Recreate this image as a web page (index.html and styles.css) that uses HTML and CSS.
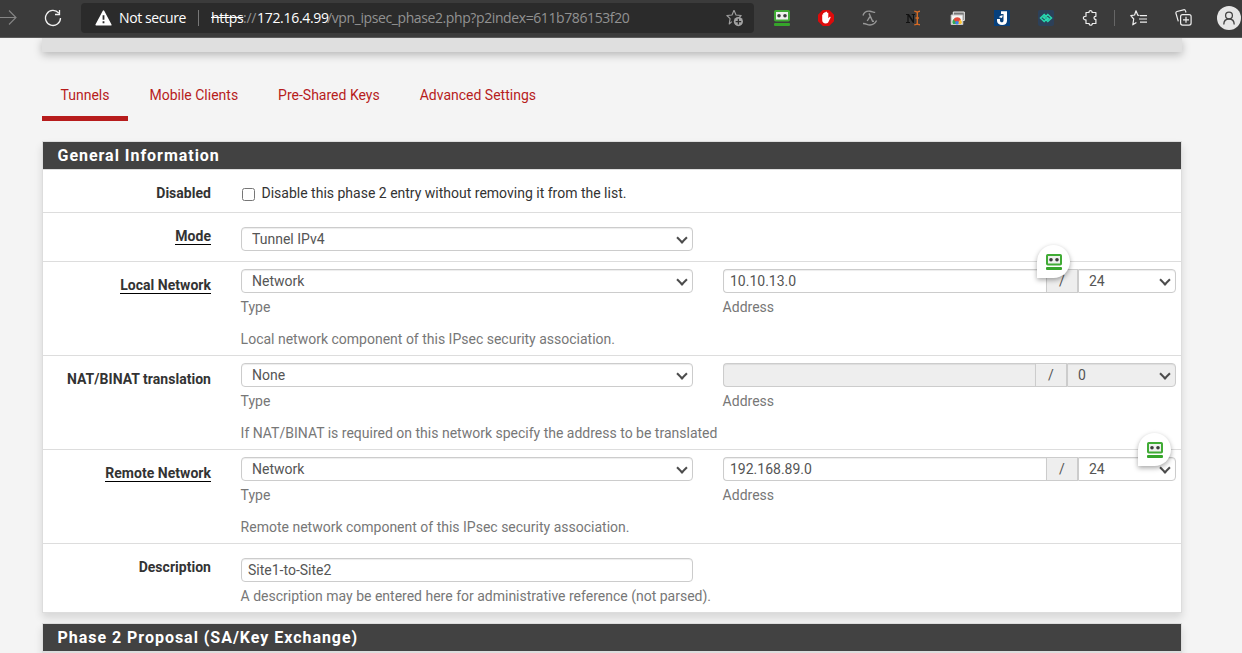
FILE: index.html
```html
<!DOCTYPE html>
<html lang="en">
<head>
<meta charset="utf-8">
<title>VPN: IPsec: Edit Phase 2</title>
<link rel="stylesheet" href="styles.css">
</head>
<body>
<svg class="defs" width="0" height="0" aria-hidden="true">
  <symbol id="robot" viewBox="0 0 16 16">
    <rect x="1" y="1" width="14" height="9.5" rx=".8" fill="#eef0ee" stroke="#40ab35" stroke-width="2"/>
    <circle cx="5" cy="5.7" r="1.8" fill="#3c3c3c"/><circle cx="11" cy="5.7" r="1.8" fill="#3c3c3c"/>
    <rect x="0" y="13" width="16" height="3" rx="1" fill="#35a52a"/>
  </symbol>
</svg>
<header class="browser">
  <svg class="forward" width="17" height="17" viewBox="0 0 17 17" fill="none" stroke="#858585" stroke-width="1.1"><path d="M0 8.5h16M9 1.5l7 7-7 7"/></svg>
  <svg class="reload" width="18" height="18" viewBox="0 0 18 18" fill="none" stroke="#f2f2f2" stroke-width="1.3"><path d="M14.8 4.2A7.5 7.5 0 1 0 16.5 9M15.5 1v4.5H11"/></svg>
  <div class="address">
    <svg class="warn" width="17" height="16" viewBox="0 0 17 16"><path d="M8.5 1.2 15.8 14.8H1.2z" fill="#fff" stroke="#fff" stroke-width="1.6" stroke-linejoin="round"/><path d="M8.5 5.2v4.6M8.5 11.2v2" stroke="#2b2b2b" stroke-width="1.8"/></svg>
    <span class="insecure">Not secure</span>
    <span class="divider"></span>
    <span class="url"><s>https</s><span class="dim slashes">://</span><span class="host">172.16.4.99</span><span class="dim path">/vpn_ipsec_phase2.php?p2index=611b786153f20</span></span>
    <svg class="star" width="18" height="18" viewBox="0 0 18 18"><path d="M8 1.2l2 4.8 5.2.5-2.5 2.4M5.8 12.6 3.2 15l.9-5.3L.9 6.5 6 6l2-4.8" fill="none" stroke="#a0a0a0" stroke-width="1.1" stroke-linejoin="round"/><circle cx="12.4" cy="12.6" r="4.6" fill="#a3a3a3"/><path d="M9.6 12.6h5.6M12.4 9.8v5.6" stroke="#2b2b2b" stroke-width="1.3"/></svg>
  </div>
  <div class="tools">
    <svg width="16" height="16"><use href="#robot"/></svg>
    <svg width="16" height="16" viewBox="0 0 16 16"><path d="M4.8 0h6.4L16 4.8v6.4L11.2 16H4.8L0 11.2V4.8z" fill="#dd0b0b"/><path d="M4.200 4.500h1V3h1.200V2.200h1.300V1.800H9v.9h1.300v5.500l1.200-1.300c.6-.5 1.400 0 1 .8l-1.700 3.600c-.6 1.600-1.500 2.200-3 2.200-2.300 0-3.600-1.300-3.600-3.500z" fill="#fff"/></svg>
    <svg width="16" height="16" viewBox="0 0 16 16" fill="none" stroke="#979797" stroke-width="1.4"><path d="M1 5.500C2 2 4.500.8 8 1.200c2 .3 3.500 1.100 5.200 1.200M1 13.500c4 .2 4 1.600 7 1.500 3.200-.1 5.200-1.600 6.600-4.500M7 3.400l3.600 7.800H12M8.200 6.100 5.200 11"/></svg>
    <svg width="16" height="16" viewBox="0 0 16 16"><path d="M0 4h3l4 6V5H5.700V4H9v1H8v8H7L2.600 6.200V12H4v1H0v-1h1.400V5H0z" fill="#111"/><path d="M8.300 1.200c1.700 0 2.500.3 3 1.300.5-1 1.300-1.300 2.700-1.300M11.300 2.500v11M8.300 14.800c1.700 0 2.500-.3 3-1.300.5 1 1.300 1.300 2.700 1.300M9.500 8h3.500" fill="none" stroke="#d56a25" stroke-width="1.400"/></svg>
    <svg width="16" height="16" viewBox="0 0 16 16"><path d="M3.300 2h11v8.500h-11z" fill="#777" stroke="#eee"/><path d="M1.200 5h11.600v9.500H1.200z" fill="#f5f5f5" stroke="#c8c8c8"/><path d="M2.800 14a4.300 4.300 0 0 1 2-5.500L7 12v2z" fill="#34a853"/><path d="M3.500 9.500a4.300 4.300 0 0 1 7.500 0L8.500 12H5.800z" fill="#e24a3b"/><path d="M10.500 9.200a4.300 4.300 0 0 1 .8 4.800H7.500z" fill="#fbc02d"/><circle cx="7" cy="12.800" r="1.800" fill="#3d80ed"/></svg>
    <svg width="16" height="16" viewBox="0 0 16 16"><path d="M0 0h16v16H0z" fill="#07407c"/><path d="M7 1.200h6v9.600c0 2.800-1.800 4.200-4.800 4.200C5 15 3 13.500 3 10.800V9h3v1.500c0 1.200.7 1.800 1.800 1.800s1.700-.6 1.700-2V4H7z" fill="#fff"/><path d="M5 7.300c.8-1.600 2.300-2 4-1.700L7.800 8z" fill="#fff"/></svg>
    <svg width="16" height="16" viewBox="0 0 16 16"><rect width="16" height="16" rx="2" fill="#2c4059"/><path d="M2.500 8 6.200 4.500 9.700 8l-3.500 3.500zM6.300 8l3.500-3.500L13.500 8l-3.700 3.500zM4.800 8l1.800-1.700M9.400 9.700 11.200 8" fill="none" stroke="#28d9b0" stroke-width="1.500"/></svg>
    <svg width="16" height="16" viewBox="0 0 16 16" fill="none" stroke="#eee" stroke-width="1.200"><path d="M4 2.500h3c-.3-2.400 3.400-2.400 3.100 0h3.800v3.800c-2.500-.2-2.500 3.300 0 3.100v4.100h-3.600c.3 2.300-3.400 2.300-3.100 0H4V9.800c-3.500.4-3.500-3.900 0-3.500z" stroke-linejoin="round"/></svg>
    <span class="tool-divider"></span>
    <svg class="fav" width="18" height="16" viewBox="0 0 18 16" fill="none" stroke="#eee" stroke-width="1.200"><path d="m9.500 5.500-1.700-.3L6 .8 4.600 5 .8 5.700 3.700 9 2.800 14.800l3.600-2.300M10 5.700h7M9 9h8M10 12.200h7" stroke-linejoin="round"/></svg>
    <svg class="coll" width="17" height="17" viewBox="0 0 17 17" fill="none" stroke="#eee" stroke-width="1.200"><path d="M3.300 12.300 1 4.500Q.5 3 2 2.500L8.500.8q1.600-.4 2 1.100l.5 1.600"/><rect x="5.600" y="5.600" width="10.500" height="10.500" rx="2"/><path d="M8 10.800h6M11 7.800v6"/></svg>
    <svg class="avatar" width="24" height="24" viewBox="0 0 24 24"><circle cx="12" cy="12" r="12" fill="#e6e6e6"/><circle cx="12" cy="9.500" r="3.400" fill="none" stroke="#444" stroke-width="1.300"/><path d="M6.800 18.500c0-3.600 2-5.500 5.200-5.500s5.200 1.900 5.200 5.500" fill="none" stroke="#444" stroke-width="1.300"/></svg>
  </div>
</header>
<div class="page">
  <div class="breadcrumb"></div>
  <nav class="tabs">
    <a class="tab active">Tunnels</a><a class="tab">Mobile Clients</a><a class="tab">Pre-Shared Keys</a><a class="tab">Advanced Settings</a>
  </nav>
  <section class="panel">
    <h2>General Information</h2>
    <div class="row row-check">
      <div class="label"><span>Disabled</span></div>
      <label class="check"><input type="checkbox"><span>Disable this phase 2 entry without removing it from the list.</span></label>
    </div>
    <div class="row row-mode">
      <div class="label"><span class="required">Mode</span></div>
      <div><div class="select"><select class="control"><option>Tunnel IPv4</option></select></div></div>
    </div>
    <div class="row row-net">
      <div class="label"><span class="required">Local Network</span></div>
      <div><div class="select"><select class="control"><option>Network</option></select></div><p>Type</p><p class="help">Local network component of this IPsec security association.</p></div>
      <div><div class="group"><input class="control" value="10.10.13.0"><span class="addon">/</span><div class="select"><select class="control"><option>24</option></select></div><span class="bubble bubble-input"><svg width="16" height="16"><use href="#robot"/></svg></span></div><p>Address</p></div>
    </div>
    <div class="row row-net">
      <div class="label"><span>NAT/BINAT translation</span></div>
      <div><div class="select"><select class="control"><option>None</option></select></div><p>Type</p><p class="help">If NAT/BINAT is required on this network specify the address to be translated</p></div>
      <div><div class="group wide"><input class="control" disabled><span class="addon">/</span><div class="select"><select class="control" disabled><option>0</option></select></div></div><p>Address</p></div>
    </div>
    <div class="row row-net">
      <div class="label"><span class="required">Remote Network</span></div>
      <div><div class="select"><select class="control"><option>Network</option></select></div><p>Type</p><p class="help">Remote network component of this IPsec security association.</p></div>
      <div><div class="group"><input class="control" value="192.168.89.0"><span class="addon">/</span><div class="select"><select class="control"><option>24</option></select></div><span class="bubble bubble-select"><svg width="16" height="16"><use href="#robot"/></svg></span></div><p>Address</p></div>
    </div>
    <div class="row row-desc">
      <div class="label"><span>Description</span></div>
      <div><input class="control" value="Site1-to-Site2"><p>A description may be entered here for administrative reference (not parsed).</p></div>
    </div>
  </section>
  <section class="panel next"><h2>Phase 2 Proposal (SA/Key Exchange)</h2></section>
</div>
</body>
</html>
```
FILE: styles.css
```css
* { box-sizing: border-box; }
body { margin: 0; height: 653px; overflow: hidden; background: #f4f4f4; color: #333; font: 14px/20px Roboto, sans-serif; }
p { margin: 0; }
.defs { position: absolute; }
.browser { position: relative; z-index: 1; display: flex; align-items: center; height: 38px; padding-bottom: 2px; background: #3b3b3b; border-bottom: 1px solid #5a5a5a; }
.browser svg { flex: none; }
.reload { margin-left: 27px; }
.address { display: flex; align-items: center; width: 673px; height: 30px; margin-left: 19px; padding: 0 10px 0 14px; border-radius: 4px; background: #2b2b2b; color: #fff; font: 14px/20px "Open Sans", sans-serif; letter-spacing: -.3px; }
.insecure { width: 79px; margin-left: 7px; letter-spacing: -.4px; }
.divider { width: 1px; height: 16px; background: #777; }
.url { display: flex; margin-left: 12px; flex: 1; white-space: nowrap; }
.url s { width: 32px; }
.slashes { width: 14px; }
.host { width: 70px; }
.path { letter-spacing: -.4px; }
.dim { color: #929292; }
.tools { display: flex; align-items: center; gap: 28px; margin-left: 20px; }
.tool-divider { width: 1px; height: 16px; margin: 0 -12px; background: #666; }
.fav { margin: 0 -1px 0 -1px; }
.avatar { margin-left: -3px; }
.page { margin: 0 60px 0 42px; }
.breadcrumb { height: 14px; background: #dfdfdf; box-shadow: 0 3px 8px rgba(0, 0, 0, .25); }
.tabs { display: flex; height: 69px; margin-bottom: 20px; color: #b71c1c; }
.tab { padding: 33px 20px 0 20px; }
.tab.active { margin-right: 1.5px; padding: 33px 18.5px 0; border-bottom: 5px solid #b71c1c; }
.panel { border: 1px solid #ddd; background: #fff; box-shadow: 0 5px 8px rgba(0, 0, 0, .12); }
.panel h2 { height: 28px; margin: 0; padding: 0 14.5px; border-bottom: 1px solid #ddd; background: #424242; color: #fff; font-size: 16px; line-height: 27px; font-weight: 700; letter-spacing: .97px; }
.next { margin-top: 10px; }
.row { display: grid; grid-template-columns: 168px 452px 453px; column-gap: 30px; border-bottom: 1px solid #ddd; }
.row:last-child { border-bottom: 0; }
.label { display: flex; justify-content: flex-end; align-items: flex-start; font-weight: 700; letter-spacing: .03px; }
.label span { height: 18px; line-height: 18px; }
.label .required { border-bottom: 1px solid #000; }
.row-check { height: 43px; padding-top: 14px; }
.check { display: flex; line-height: 18px; }
.check input { width: 13px; height: 13px; margin: 4px 6.5px 0 1px; }
.row-mode { height: 49px; padding-top: 14px; }
.row-net { height: 94px; padding-top: 7px; }
.row-desc { height: 68px; padding-top: 14px; }
.row-net .label { padding-top: 7px; }
.row p { margin: 4px 0 0 -.4px; color: #777; white-space: nowrap; }
.row .help { margin-top: 12px; }
.control { display: block; width: 100%; height: 24px; margin: 0; padding: 0 6px; border: 1px solid #ccc; border-radius: 4px; background: #fff; color: #555; font: 14px/20px Roboto, sans-serif; box-shadow: inset 0 1px 1px rgba(0, 0, 0, .075); opacity: 1; }
.control:disabled { background: #eee; color: #555; }
.select { position: relative; }
select.control { appearance: none; padding: 0 20px 0 10px; }
.select::after { content: ""; position: absolute; top: 7px; right: 7px; width: 6px; height: 6px; border: solid #4c4c4c; border-width: 0 2px 2px 0; transform: rotate(45deg); }
.group { position: relative; display: grid; grid-template-columns: 323px 32px 98px; }
.group.wide { grid-template-columns: 312px 32px 109px; }
.group input { border-right: 0; border-radius: 4px 0 0 4px; }
.group select { border-radius: 0 4px 4px 0; }
.addon { height: 24px; border: 1px solid #ccc; background: #eee; color: #555; text-align: center; line-height: 22px; }
.bubble { position: absolute; z-index: 1; top: -24px; width: 33px; height: 33px; padding: 9px; border-radius: 50% 50% 50% 0; background: #fff; box-shadow: 0 2px 5px rgba(0, 0, 0, .35); }
.bubble svg { display: block; }
.bubble-input { left: 314px; }
.bubble-select { left: 415px; }
```
